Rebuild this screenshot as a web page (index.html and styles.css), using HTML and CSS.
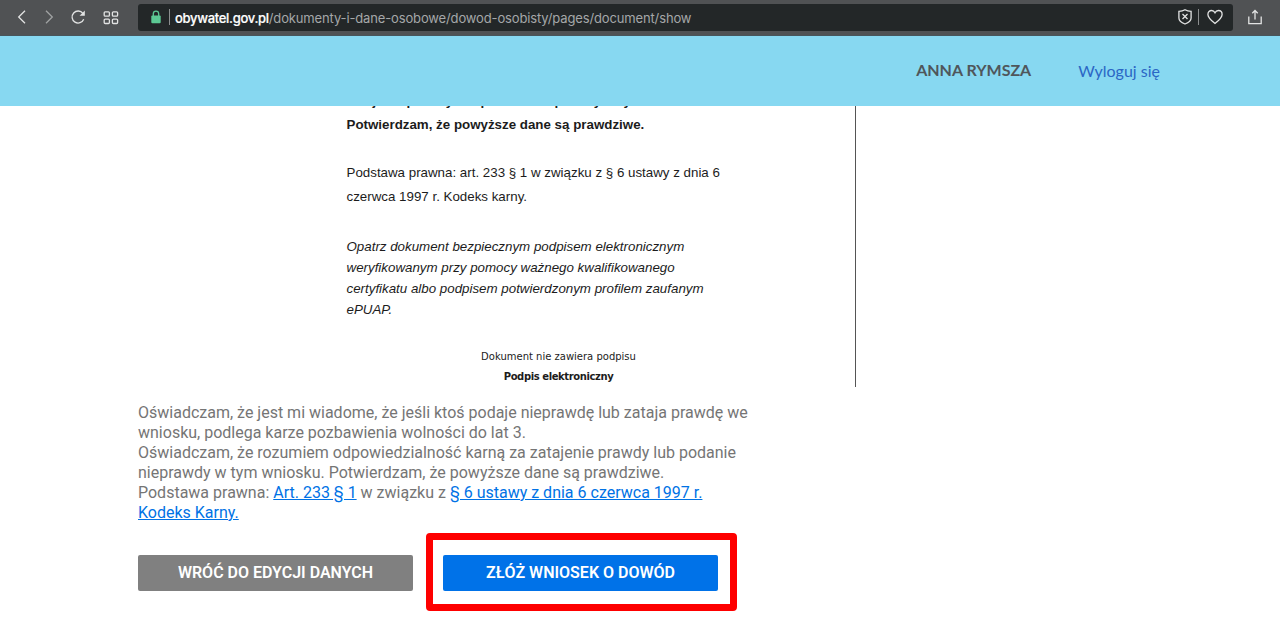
FILE: index.html
```html
<!DOCTYPE html>
<html lang="pl">
  <head>
    <meta charset="UTF-8" />
    <meta name="viewport" content="width=device-width, initial-scale=1.0" />
    <title>Dowód osobisty</title>
    <link rel="stylesheet" href="styles.css">
  </head>
  <body>
    <div class="browser">
      <div class="browser__nav">
        <svg class="browser__icon" width="16" height="16" viewBox="0 0 16 16"><path d="M11 1.8 L4.7 8 L11 14.2" /></svg>
        <svg class="browser__icon browser__icon--disabled" width="16" height="16" viewBox="0 0 16 16"><path d="M5 1.8 L11.3 8 L5 14.2" /></svg>
        <svg class="browser__icon" width="16" height="16" viewBox="0 0 16 16">
          <path d="M13.7 10.2 A6 6 0 1 1 12.9 4.4" />
          <path class="browser__icon-fill" d="M14.8 1.6 V6.8 H9.6 Z" />
        </svg>
        <svg class="browser__icon" width="16" height="16" viewBox="0 0 16 16">
          <rect x="1.2" y="2.8" width="5.2" height="4.4" rx="1" />
          <rect x="9.4" y="2.8" width="5.2" height="4.4" rx="1" />
          <rect x="1.2" y="10.1" width="5.2" height="4.4" rx="1" />
          <rect x="9.4" y="10.1" width="5.2" height="4.4" rx="1" />
        </svg>
      </div>
      <div class="address">
        <svg class="address__lock" width="10" height="14" viewBox="0 0 10 14">
          <path class="address__shackle" d="M2.3 7 V3.8 A2.7 2.7 0 0 1 7.7 3.8 V7" />
          <rect x="0.3" y="5.6" width="9.4" height="7.6" rx="1" />
        </svg>
        <span class="address__divider"></span>
        <span class="address__url"><span class="address__host">obywatel.gov.pl</span><span class="address__path">/dokumenty-i-dane-osobowe/dowod-osobisty/pages/document/show</span></span>
        <svg class="browser__icon" width="14" height="16" viewBox="0 0 14 16">
          <path d="M7 .8 C5 2 3 2.3 .9 2.3 V9 C.9 12 3.5 13.6 7 15 C10.5 13.6 13.1 12 13.1 9 V2.3 C11 2.3 9 2 7 .8 Z" />
          <path d="M4.5 5 L9.5 10 M9.5 5 L4.5 10" />
        </svg>
        <span class="address__divider address__divider--right"></span>
        <svg class="browser__icon" width="16" height="16" viewBox="0 0 16 16">
          <path d="M8 14.5 C4 11.2 .9 8.8 .9 5.4 C.9 3 2.6 1.5 4.6 1.5 C6 1.5 7.3 2.3 8 3.7 C8.7 2.3 10 1.5 11.4 1.5 C13.4 1.5 15.1 3 15.1 5.4 C15.1 8.8 12 11.2 8 14.5 Z" />
        </svg>
      </div>
      <svg class="browser__icon" width="14" height="16" viewBox="0 0 14 16">
        <path d="M.8 7.6 V14.6 H13.2 V7.6 M7 10.5 V1.5 M4.3 4.3 L7 1.5 L9.7 4.3" />
      </svg>
    </div>

    <header class="user-bar">
      <span class="user-bar__name">ANNA RYMSZA</span>
      <a class="user-bar__logout" href="#">Wyloguj się</a>
    </header>

    <main class="content">
      <div class="document">
        <p class="document__statement">zatajenie prawdy lub podanie nieprawdy w tym<br>Potwierdzam, że powyższe dane są prawdziwe.</p>
        <p class="document__legal">Podstawa prawna: art. 233 § 1 w związku z § 6 ustawy z dnia 6<br>czerwca 1997 r. Kodeks karny.</p>
        <p class="document__hint">Opatrz dokument bezpiecznym podpisem elektronicznym<br>weryfikowanym przy pomocy ważnego kwalifikowanego<br>certyfikatu albo podpisem potwierdzonym profilem zaufanym<br>ePUAP.</p>
        <div class="document__signature">
          <p>Dokument nie zawiera podpisu</p>
          <p class="document__signature--label">Podpis elektroniczny</p>
        </div>
      </div>

      <div class="declaration">
        <p>Oświadczam, że jest mi wiadome, że jeśli ktoś podaje nieprawdę lub zataja prawdę we<br>wniosku, podlega karze pozbawienia wolności do lat 3.</p>
        <p>Oświadczam, że rozumiem odpowiedzialność karną za zatajenie prawdy lub podanie<br>nieprawdy w tym wniosku. Potwierdzam, że powyższe dane są prawdziwe.</p>
        <p>Podstawa prawna: <a href="#">Art. 233 § 1</a> w związku z <a href="#">§ 6 ustawy z dnia 6 czerwca 1997 r.<br>Kodeks Karny.</a></p>
      </div>

      <div class="actions">
        <button class="button button--back">WRÓĆ DO EDYCJI DANYCH</button>
        <div class="actions__highlight">
          <button class="button button--submit">ZŁÓŻ WNIOSEK O DOWÓD</button>
        </div>
      </div>
    </main>
  </body>
</html>
```
FILE: styles.css
```css
/* General Styles */
* {
  box-sizing: border-box;
}

body {
  margin: 0;
  height: 634px;
  overflow: hidden;
  background-color: #fff;
  font-family: Roboto, sans-serif;
}

p {
  margin: 0;
}

/* Browser Toolbar */
.browser {
  display: flex;
  align-items: center;
  height: 36px;
  padding: 0 17px 1px 14px;
  background-color: #505254;
  border-bottom: 1px solid #48555b;
}

.browser__nav {
  display: flex;
  gap: 11px;
  width: 124px;
}

.browser__nav .browser__icon:nth-child(2) {
  margin-right: 2px;
}

.browser__nav .browser__icon:nth-child(3) {
  margin-right: 6px;
}

.browser__icon {
  flex: none;
  fill: none;
  stroke: #e2e3e3;
  stroke-width: 1.3;
}

.browser__icon--disabled {
  stroke: #a0a2a3;
}

.browser__icon-fill {
  fill: #e2e3e3;
  stroke: none;
}

.address {
  display: flex;
  align-items: center;
  width: 1095px;
  height: 27px;
  margin-right: 15px;
  padding: 0 10px 0 13px;
  border-radius: 3px;
  background-color: #232728;
  font: 13px Inter, sans-serif;
}

.address__lock {
  fill: #5cc994;
}

.address__shackle {
  fill: none;
  stroke: #5cc994;
  stroke-width: 1.3;
}

.address__divider {
  width: 1px;
  height: 16px;
  margin: 0 5px 0 8px;
  background-color: #8c8e8f;
}

.address__divider--right {
  margin: 0 8px 0 6px;
}

.address__url {
  flex: 1;
  padding-top: 1px;
  white-space: nowrap;
}

.address__host {
  color: #fff;
  font-weight: 500;
  letter-spacing: -0.3px;
  -webkit-text-stroke: 0.2px #fff;
}

.address__path {
  color: #a5a7a8;
  letter-spacing: -0.14px;
}

/* User Bar */
.user-bar {
  display: flex;
  align-items: center;
  justify-content: flex-end;
  gap: 47px;
  height: 70px;
  padding: 0 120px 3px 0;
  background-color: #87d8f1;
  font-family: Lato, sans-serif;
  font-size: 16px;
}

.user-bar__name {
  color: #4f565b;
  font-weight: 700;
}

.user-bar__logout {
  padding-top: 2px;
  color: #2b66c5;
  text-decoration: none;
}

/* Document Preview */
.content {
  padding-left: 138px;
}

.document {
  display: flex;
  flex-direction: column;
  justify-content: flex-end;
  width: 718px;
  height: 281px;
  padding-left: 208.5px;
  overflow: hidden;
  border-right: 1px solid #555;
  color: #1c1c1c;
  font-family: "Liberation Sans", Arial, sans-serif;
  font-size: 13.33px;
}

.document__statement {
  font-weight: 700;
  line-height: 24px;
}

.document__legal {
  margin-top: 24px;
  line-height: 24px;
}

.document__hint {
  margin-top: 27px;
  font-style: italic;
  line-height: 21px;
}

.document__signature {
  width: 424px;
  margin-top: 27px;
  font-family: "DejaVu Sans", Verdana, sans-serif;
  font-size: 10px;
  line-height: 20px;
  text-align: center;
}

.document__signature--label {
  font-weight: 700;
  letter-spacing: -0.4px;
}

/* Declaration */
.declaration {
  margin-top: 16px;
  color: #757575;
  font-size: 16px;
  line-height: 20px;
}

.declaration a {
  color: #0072e5;
}

/* Action Buttons */
.actions {
  display: flex;
  align-items: flex-start;
  gap: 13px;
  margin-top: 10px;
}

.actions__highlight {
  padding: 15px 12px 13px 10px;
  border: 7px solid #fe0000;
  border-radius: 4px;
}

.button {
  display: block;
  width: 275px;
  height: 36px;
  padding: 0 0 2px;
  border: none;
  border-radius: 2px;
  color: #fff;
  font-family: Roboto, sans-serif;
  font-size: 16px;
  font-weight: 600;
  cursor: pointer;
}

.button--back {
  margin-top: 22px;
  background-color: #808080;
}

.button--submit {
  background-color: #0072e8;
}
```
